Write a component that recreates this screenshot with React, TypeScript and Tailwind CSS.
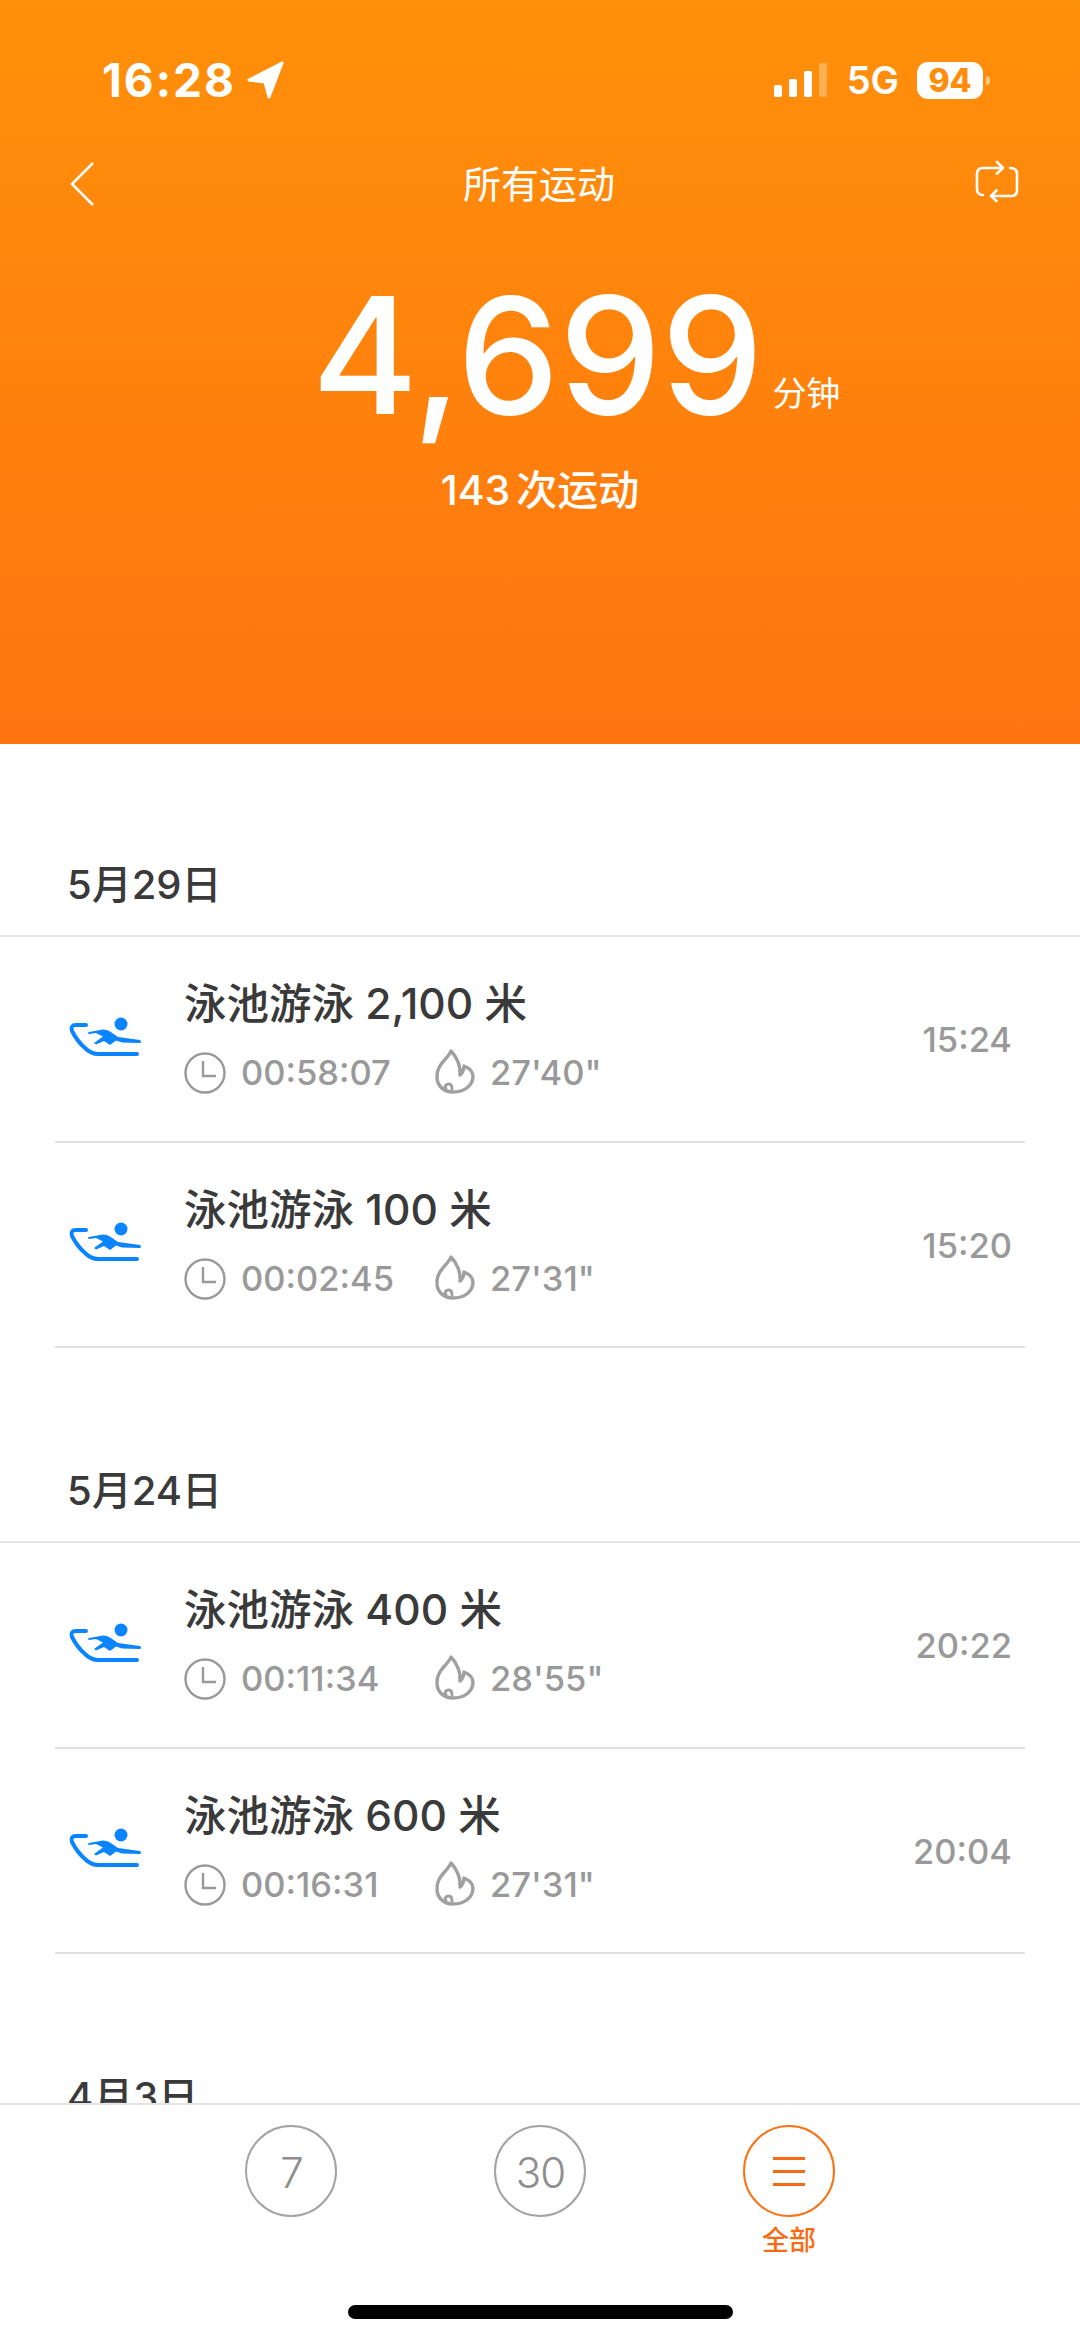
const font = { fontFamily: '"Inter","Noto Sans CJK SC",sans-serif' };

function Swim() {
  return (
    <svg width="90" height="60" viewBox="0 0 90 60" fill="none" className="shrink-0">
      <circle cx="61" cy="15" r="6.5" fill="#0a84ff" />
      <path d="M26 16H16Q10 16 12 22Q17 32 25 39Q31 45 38 45H77" stroke="#0a84ff" strokeWidth="4" strokeLinecap="round" />
      <path d="M29 23L43 20.5Q47 20.5 50 22.5L58 28L80 31Q82 33 80 34L62 33.5L56 31.5L50 36L44 32L36 35.5L34 34L43 27.5L36 24L29 25Q27 24 29 23Z" fill="#0a84ff" />
    </svg>
  );
}

function Clock() {
  return (
    <svg width="42" height="42" viewBox="0 0 42 42" fill="none" className="shrink-0">
      <circle cx="21" cy="21" r="19.5" stroke="#999999" strokeWidth="2.4" />
      <path d="M19 9V24H32" stroke="#999999" strokeWidth="2.4" />
    </svg>
  );
}

function Flame() {
  return (
    <svg width="60" height="60" viewBox="0 0 60 60" fill="none" className="shrink-0 -my-[9px]">
      <path d="M27 8C24 16 12 22 13 34C13 43 20 49 29 49C40 49 49 43 49 33C49 29 45 25 40 23C40 27 38 31 36 32C37 24 33 14 27 8Z" stroke="#a0a0a0" strokeWidth="3.4" strokeLinejoin="round" />
      <path d="M22 46C20 43 22 41 25 41C27 41 28 43 28 46" stroke="#a0a0a0" strokeWidth="3" strokeLinecap="round" />
    </svg>
  );
}

function Row({ title, dur, pace, time }: { title: string; dur: string; pace: string; time: string }) {
  return (
    <div className="mx-[55px] h-[205.5px] border-b-2 border-[#dedede] flex items-center">
      <div className="w-[129px] pl-[5px] flex items-center">
        <Swim />
      </div>
      <div className="flex-1 flex flex-col gap-[19px] mb-[8px]">
        <div className="text-[42.5px] leading-[58px] font-medium text-[#3a3a3a]">{title}</div>
        <div className="flex items-center text-[34.5px] leading-[42px] font-medium text-[#999999]">
          <Clock />
          <span className="ml-[15px] w-[183px]">{dur}</span>
          <Flame />
          <span className="ml-[6px]">{pace}</span>
        </div>
      </div>
      <div className="pr-[13px] mt-[3px] text-[34.5px] font-medium text-[#999999]">{time}</div>
    </div>
  );
}

function Section({ date, children }: { date: string; children?: React.ReactNode }) {
  return (
    <div className="mb-[117px]">
      <div className="h-[52px] pl-[67px] text-[40px] leading-[52px] font-medium text-[#3a3a3a] mb-[24px]">{date}</div>
      <div className="border-t-2 border-[#e6e6e6]">{children}</div>
    </div>
  );
}

function Status() {
  return (
    <div className="h-[100px] pt-[60px] pl-[102px] pr-[90px] flex items-center justify-between text-white">
      <div className="flex items-center gap-[10px]">
        <span className="text-[46px] leading-none font-bold tracking-[2px]">16:28</span>
        <svg width="40" height="40" viewBox="0 0 40 40">
          <path d="M36 3L3 20L19 22L23 37Z" fill="#ffffff" stroke="#ffffff" strokeWidth="3" strokeLinejoin="round" />
        </svg>
      </div>
      <div className="flex items-center">
        <div className="flex items-end gap-[7px] h-[34px]">
          <div className="w-[8px] h-[12px] rounded-[2px] bg-white" />
          <div className="w-[8px] h-[18px] rounded-[2px] bg-white" />
          <div className="w-[8px] h-[26px] rounded-[2px] bg-white" />
          <div className="w-[8px] h-[34px] rounded-[2px] bg-white/30" />
        </div>
        <span className="ml-[20px] text-[38px] leading-none font-semibold">5G</span>
        <div className="ml-[18px] w-[66px] h-[37px] rounded-[11px] bg-white text-[#ff8c0a] text-[32px] leading-[37px] font-extrabold text-center">94</div>
        <div className="ml-[3px] w-[4px] h-[9px] rounded-r bg-white/50" />
      </div>
    </div>
  );
}

function Nav() {
  return (
    <div className="mt-[56px] h-[56px] pl-[70px] pr-[50px] flex items-center justify-between text-white">
      <div className="w-[48px]">
        <svg width="24" height="44" viewBox="0 0 24 44" fill="none">
          <path d="M23 1L2 22L23 43" stroke="#ffffff" strokeWidth="2.5" />
        </svg>
      </div>
      <span className="text-[38px] leading-none">所有运动</span>
      <svg width="70" height="70" viewBox="0 0 70 70" fill="none" className="-my-[7px]">
        <path d="M23 46Q17 46 17 40V25Q17 19 23 19H43M37 13L43 19L37 24.5" stroke="#ffffff" strokeWidth="2.6" strokeLinecap="round" strokeLinejoin="round" />
        <path d="M50 19Q57 19 57 25V41Q57 47 51 47H31M36.5 41.5L31 47L36.5 52" stroke="#ffffff" strokeWidth="2.6" strokeLinecap="round" strokeLinejoin="round" />
      </svg>
    </div>
  );
}

function Tab({ label, active }: { label: string; active?: boolean }) {
  return (
    <div className="relative w-[92px] h-[92px]">
      <div className={`w-full h-full rounded-full border-2 flex items-center justify-center ${active ? 'border-[#f97316]' : 'border-[#a3a3a3]'}`}>
        {active ? (
          <div className="flex flex-col gap-[10px]">
            <div className="w-[32px] h-[3px] bg-[#f96a14]" />
            <div className="w-[32px] h-[3px] bg-[#f96a14]" />
            <div className="w-[32px] h-[3px] bg-[#f96a14]" />
          </div>
        ) : (
          <span className="pt-[3px] pl-[1px] text-[42px] font-light tracking-[-1px] text-[#8e8e8e]">{label}</span>
        )}
      </div>
      {active && (
        <div className="absolute top-[100px] left-0 right-0 text-center text-[27px] leading-[32px] font-medium text-[#f96a14]">全部</div>
      )}
    </div>
  );
}

export default function App() {
  return (
    <div className="w-[1080px] h-[2341px] bg-white flex flex-col overflow-hidden" style={font}>
      <div className="h-[744px] shrink-0 bg-gradient-to-b from-[#ff900a] to-[#ff740f]">
        <Status />
        <Nav />
        <div className="mt-[53px] flex items-end justify-center pl-[72px]">
          <span className="text-[162px] leading-[180px] font-medium text-white">4,699</span>
          <span className="ml-[9px] mb-[29px] text-[34px] leading-[44px] text-white">分钟</span>
        </div>
        <div className="mt-[20px] text-center text-[41px] leading-[50px] font-medium text-white">143<span className="ml-[6px]">次运动</span></div>
      </div>
      <div className="flex-1 overflow-hidden pt-[115px]">
        <Section date="5月29日">
          <Row title="泳池游泳 2,100 米" dur="00:58:07" pace={`27'40"`} time="15:24" />
          <Row title="泳池游泳 100 米" dur="00:02:45" pace={`27'31"`} time="15:20" />
        </Section>
        <Section date="5月24日">
          <Row title="泳池游泳 400 米" dur="00:11:34" pace={`28'55"`} time="20:22" />
          <Row title="泳池游泳 600 米" dur="00:16:31" pace={`27'31"`} time="20:04" />
        </Section>
        <Section date="4月3日" />
      </div>
      <div className="relative h-[238px] shrink-0 bg-white border-t-2 border-[#e4e4e4]">
        <div className="pt-[20px] flex justify-center gap-[157px]">
          <Tab label="7" />
          <Tab label="30" />
          <Tab label="全部" active />
        </div>
        <div className="absolute left-[348px] bottom-[22px] w-[385px] h-[14px] rounded-full bg-black" />
      </div>
    </div>
  );
}
